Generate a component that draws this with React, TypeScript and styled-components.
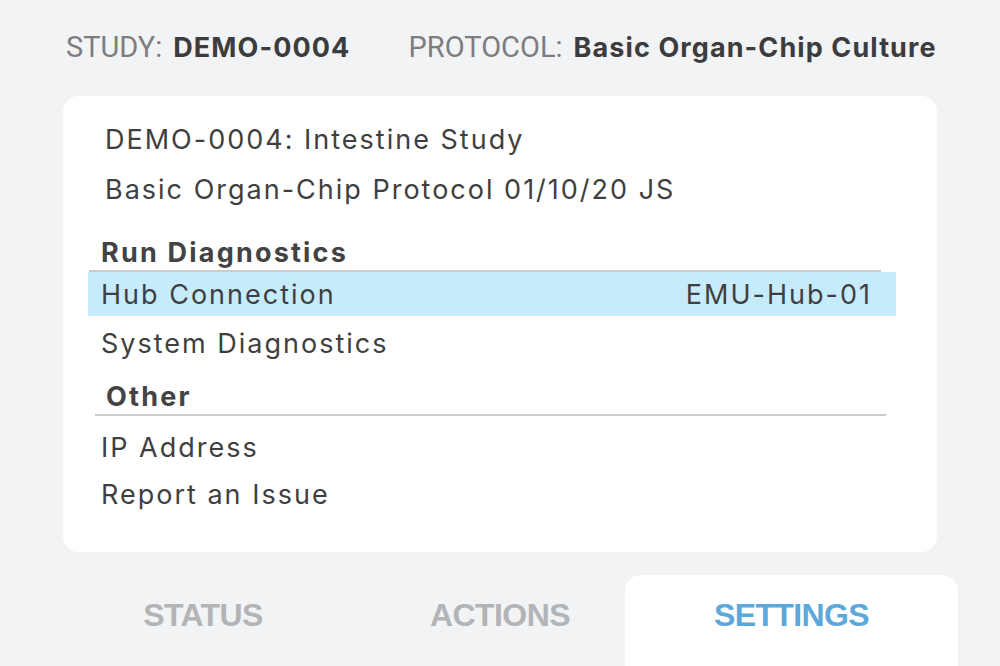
import React from "react";
import styled, { createGlobalStyle } from "styled-components";

const Global = createGlobalStyle`
  html, body { margin: 0; padding: 0; background: #f2f3f5; }
  body { width: 1000px; height: 666px; overflow: hidden; font-family: Inter, "Noto Sans", sans-serif; }
`;

const Page = styled.div`
  width: 1000px;
  height: 666px;
  display: flex;
  flex-direction: column;
  background: #f2f3f5;
`;

const Header = styled.div`
  display: flex;
  align-items: baseline;
  padding: 27px 0 0 66px;
  height: 68px;
  box-sizing: border-box;
  gap: 58px;
  line-height: 40px;
`;

const HeaderItem = styled.div`
  display: flex;
  align-items: baseline;
  gap: 11px;
  white-space: nowrap;
`;

const HeaderLabel = styled.span`
  font-family: Roboto, sans-serif;
  font-size: 29px;
  letter-spacing: 0;
  color: #7d7d7f;
  font-weight: 400;
`;

const HeaderValue = styled.span`
  font-size: 27px;
  letter-spacing: 1.1px;
  color: #3c3c3e;
  font-weight: 700;
`;

const Card = styled.div`
  margin: 28px 0 0 63px;
  width: 874px;
  height: 456px;
  background: #fff;
  border-radius: 16px;
  box-sizing: border-box;
  padding-top: 19px;
  display: flex;
  flex-direction: column;
`;

const Text = styled.div`
  font-size: 27px;
  letter-spacing: 2px;
  color: #3f3f41;
`;

const InfoLine = styled(Text)`
  padding-left: 42px;
  line-height: 50px;
`;

const SectionHead = styled(Text)<{ $indent: number; $top: number }>`
  margin-top: ${(p) => p.$top}px;
  padding-left: ${(p) => p.$indent}px;
  font-weight: 700;
  line-height: 34px;
  letter-spacing: 2.2px;
  color: #434345;
`;

const Divider = styled.div<{ $left: number; $right: number }>`
  margin: 0 ${(p) => p.$right}px 0 ${(p) => p.$left}px;
  height: 2px;
  background: #cbcbcb;
`;

const Row = styled(Text)<{ $active?: boolean }>`
  display: flex;
  justify-content: space-between;
  align-items: center;
  margin: 0 41px 0 25px;
  padding: 0 24px 0 13px;
  height: ${(p) => (p.$active ? 44 : 54)}px;
  background: ${(p) => (p.$active ? "#c6ecfc" : "transparent")};
`;

const PlainRow = styled(Text)<{ $top?: number }>`
  margin-top: ${(p) => p.$top ?? 0}px;
  padding-left: 38px;
  height: 47px;
  display: flex;
  align-items: center;
`;

const Tabs = styled.div`
  margin-top: 23px;
  flex: 1;
  display: grid;
  grid-template-columns: 326px 259px 333px;
  padding-left: 40px;
`;

const Tab = styled.div<{ $active?: boolean; $shift?: number }>`
  display: flex;
  justify-content: center;
  padding-top: 22px;
  padding-left: ${(p) => p.$shift ?? 0}px;
  background: ${(p) => (p.$active ? "#fff" : "transparent")};
  border-radius: 16px 16px 0 0;
  font-family: "Liberation Sans", Arial, sans-serif;
  font-weight: 700;
  font-size: 32px;
  line-height: 36px;
  letter-spacing: -0.6px;
  color: ${(p) => (p.$active ? "#5ca8db" : "#b3b4b6")};
`;

export default function App() {
  return (
    <Page>
      <Global />
      <Header>
        <HeaderItem>
          <HeaderLabel>STUDY:</HeaderLabel>
          <HeaderValue>DEMO-0004</HeaderValue>
        </HeaderItem>
        <HeaderItem>
          <HeaderLabel>PROTOCOL:</HeaderLabel>
          <HeaderValue>Basic Organ-Chip Culture</HeaderValue>
        </HeaderItem>
      </Header>
      <Card>
        <InfoLine>DEMO-0004: Intestine Study</InfoLine>
        <InfoLine>Basic Organ-Chip Protocol 01/10/20 JS</InfoLine>
        <SectionHead $indent={38} $top={21}>Run Diagnostics</SectionHead>
        <Divider $left={26} $right={56} />
        <Row $active>
          <span>Hub Connection</span>
          <span>EMU-Hub-01</span>
        </Row>
        <Row>
          <span>System Diagnostics</span>
        </Row>
        <SectionHead $indent={43} $top={10}>Other</SectionHead>
        <Divider $left={32} $right={51} />
        <PlainRow $top={8}>IP Address</PlainRow>
        <PlainRow>Report an Issue</PlainRow>
      </Card>
      <Tabs>
        <Tab>STATUS</Tab>
        <Tab $shift={9}>ACTIONS</Tab>
        <Tab $active>SETTINGS</Tab>
      </Tabs>
    </Page>
  );
}
